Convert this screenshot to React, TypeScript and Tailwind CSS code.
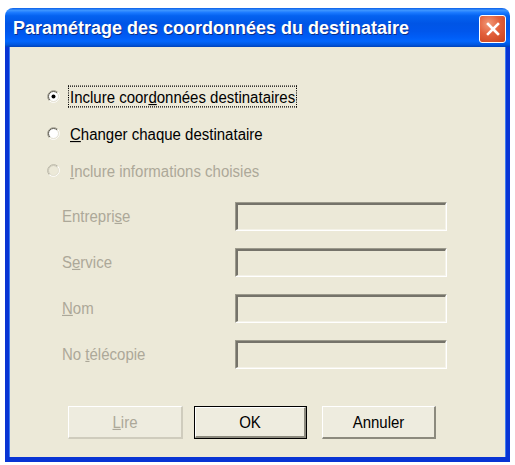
import type { ReactNode } from "react";

const font = "font-['Liberation_Sans',Arial,sans-serif]";

function Radio({ checked = false, disabled = false }: { checked?: boolean; disabled?: boolean }) {
  const outerDark = disabled ? "#b9b6a7" : "#a09d91";
  const innerDark = disabled ? "#c9c6b7" : "#5c5a50";
  return (
    <svg width="13" height="13" viewBox="0 0 13 13" className="shrink-0">
      <circle cx="6.5" cy="6.5" r="5" fill={disabled ? "#ece9d8" : "#ffffff"} />
      <path d="M2.26 10.74 A6 6 0 0 1 10.74 2.26" fill="none" stroke={outerDark} strokeWidth="1" />
      <path d="M10.74 2.26 A6 6 0 0 1 2.26 10.74" fill="none" stroke="#ffffff" strokeWidth="1" />
      <path d="M2.96 10.04 A5 5 0 0 1 10.04 2.96" fill="none" stroke={innerDark} strokeWidth="1" />
      <path d="M10.04 2.96 A5 5 0 0 1 2.96 10.04" fill="none" stroke="#e4e1d3" strokeWidth="1" />
      {checked && <circle cx="6.5" cy="6.5" r="2" fill="#000000" />}
    </svg>
  );
}

function RadioRow({ children, checked, disabled, focused }: { children: ReactNode; checked?: boolean; disabled?: boolean; focused?: boolean }) {
  return (
    <div className="flex h-[37px] items-center pl-[36px]">
      <Radio checked={checked} disabled={disabled} />
      <span
        className={`ml-[8px] inline-block scale-y-[1.15] px-[1px] text-[15px] leading-[17px] ${disabled ? "text-[#aca899]" : "text-black"} ${
          focused ? "border border-dotted border-black" : "border border-transparent"
        }`}
      >
        {children}
      </span>
    </div>
  );
}

function Field({ label }: { label: ReactNode }) {
  return (
    <div className="flex h-[29px] items-center">
      <span className="w-[224px] shrink-0 pl-[51px] text-[15px] text-[#aca899]">
        <span className="inline-block scale-y-[1.15]">{label}</span>
      </span>
      <div className="h-[29px] w-[212px] border border-t-[#9c9a8c] border-l-[#9c9a8c] border-r-white border-b-white">
        <div className="h-full w-full border-t-2 border-l-2 border-r border-b border-t-[#75736a] border-l-[#75736a] border-r-[#f4f2e8] border-b-[#f4f2e8] bg-[#ece9d8]" />
      </div>
    </div>
  );
}

function Button({ children, disabled, isDefault, width }: { children: ReactNode; disabled?: boolean; isDefault?: boolean; width: string }) {
  const label = <span className="inline-block scale-y-[1.15]">{children}</span>;
  if (isDefault) {
    return (
      <div className={`${width} h-[33px] border border-black`}>
        <div className="flex h-full w-full items-center justify-center border-t border-l border-r-2 border-b-2 border-t-white border-l-white border-r-[#8c8a7e] border-b-[#8c8a7e] bg-[#eeecdf] text-[15px] text-black">
          {label}
        </div>
      </div>
    );
  }
  return (
    <div
      className={`${width} flex h-[33px] items-center justify-center border-t border-l border-r-2 border-b-2 border-t-white border-l-white bg-[#eeecdf] text-[15px] ${
        disabled ? "border-r-[#cfccbd] border-b-[#cfccbd] text-[#aca899]" : "border-r-[#8c8a7e] border-b-[#8c8a7e] text-black"
      }`}
    >
      {label}
    </div>
  );
}

export default function App() {
  return (
    <div className={`h-[465px] w-[515px] bg-white pt-[8px] pl-[5px] ${font}`}>
      <div className="flex w-[505px] flex-col">
        {/* title bar */}
        <div className="flex h-[39px] items-start rounded-t-[8px] bg-[linear-gradient(to_bottom,#0a5fe8_0%,#3d95ff_6%,#1a79ff_12%,#0462f0_20%,#0055e6_40%,#0056ec_60%,#005df7_75%,#0266fd_85%,#0057e0_94%,#0042b8_100%)] pl-[8px] pr-[4px]">
          <span className="mt-[9px] text-[18px] leading-[22px] font-bold text-white [text-shadow:1px_1px_0_#0b2f8a]">
            Paramétrage des coordonnées du destinataire
          </span>
          <div className="mt-[7px] ml-auto flex h-[28px] w-[27px] items-center justify-center rounded-[3px] border border-white bg-[radial-gradient(circle_at_35%_30%,#f29a78_0%,#e2603c_45%,#c8411c_100%)]">
            <svg width="16" height="16" viewBox="0 0 16 16">
              <path d="M3 3 L13 13 M13 3 L3 13" stroke="#ffffff" strokeWidth="2.6" strokeLinecap="square" />
            </svg>
          </div>
        </div>

        {/* body */}
        <div className="bg-[#0834d4] px-[4px] pb-[5px]">
          <div className="border-x border-[#3f7cf0] bg-[#ece9d8]">
            <div className="h-[410px] border-x border-[#ece9d8]">
              <div className="pt-[31px]">
                <RadioRow checked focused>
                  Inclure coor<u>d</u>onnées destinataires
                </RadioRow>
                <RadioRow>
                  <u>C</u>hanger chaque destinataire
                </RadioRow>
                <RadioRow disabled>
                  <u>I</u>nclure informations choisies
                </RadioRow>
              </div>

              <div className="mt-[13px] flex flex-col gap-[17px]">
                <Field label={<>Entrepri<u>s</u>e</>} />
                <Field label={<>S<u>e</u>rvice</>} />
                <Field label={<><u>N</u>om</>} />
                <Field label={<>No <u>t</u>élécopie</>} />
              </div>

              <div className="mt-[37px] flex pl-[57px]">
                <Button disabled width="w-[115px]">
                  <u>L</u>ire
                </Button>
                <div className="ml-[11px]">
                  <Button isDefault width="w-[113px]">
                    OK
                  </Button>
                </div>
                <div className="ml-[15px]">
                  <Button width="w-[114px]">Annuler</Button>
                </div>
              </div>
            </div>
          </div>
        </div>
      </div>
    </div>
  );
}
